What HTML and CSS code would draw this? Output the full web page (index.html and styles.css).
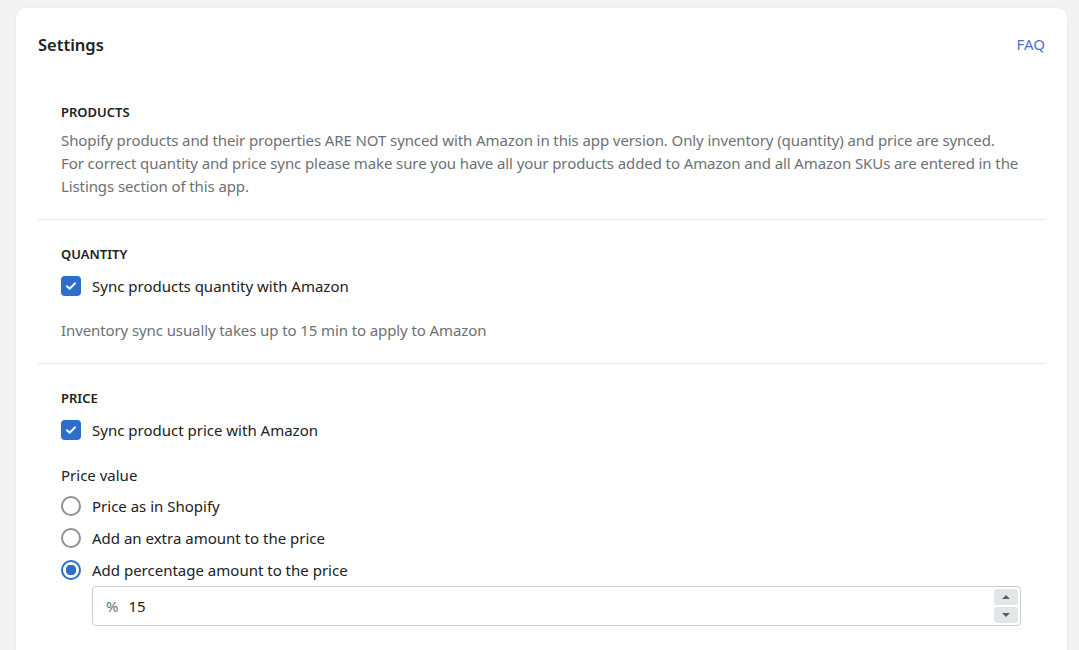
FILE: index.html
```html
<!DOCTYPE html>
<html lang="en">
<head>
  <meta charset="UTF-8">
  <title>Settings</title>
  <link rel="stylesheet" href="styles.css">
</head>
<body>
  <main class="card">
    <header class="card-head">
      <h1>Settings</h1>
      <a href="#" class="faq">FAQ</a>
    </header>

    <section class="block">
      <h2>Products</h2>
      <p class="muted">Shopify products and their properties ARE NOT synced with Amazon in this app version. Only inventory (quantity) and price are synced.<br>For correct quantity and price sync please make sure you have all your products added to Amazon and all Amazon SKUs are entered in the Listings section of this app.</p>
    </section>

    <section class="block">
      <h2>Quantity</h2>
      <label class="check">
        <span class="box"><svg viewBox="0 0 20 20" width="20" height="20"><path d="M6 10.3l2.6 2.5L14 7.4" fill="none" stroke="#fff" stroke-width="2" stroke-linecap="round" stroke-linejoin="round"/></svg></span>
        Sync products quantity with Amazon
      </label>
      <p class="muted note">Inventory sync usually takes up to 15 min to apply to Amazon</p>
    </section>

    <section class="block last">
      <h2>Price</h2>
      <label class="check">
        <span class="box"><svg viewBox="0 0 20 20" width="20" height="20"><path d="M6 10.3l2.6 2.5L14 7.4" fill="none" stroke="#fff" stroke-width="2" stroke-linecap="round" stroke-linejoin="round"/></svg></span>
        Sync product price with Amazon
      </label>

      <p class="field-label">Price value</p>
      <div class="radios">
        <label class="radio"><span class="dot"></span>Price as in Shopify</label>
        <label class="radio"><span class="dot"></span>Add an extra amount to the price</label>
        <label class="radio on"><span class="dot"></span>Add percentage amount to the price</label>
      </div>

      <div class="number">
        <span class="prefix">%</span>
        <span class="value">15</span>
        <span class="spin">
          <span class="step"><svg viewBox="0 0 10 6" width="10" height="6"><path d="M1 5h8L5 1z" fill="#5c5f62"/></svg></span>
          <span class="step"><svg viewBox="0 0 10 6" width="10" height="6"><path d="M1 1h8L5 5z" fill="#5c5f62"/></svg></span>
        </span>
      </div>
    </section>
  </main>
</body>
</html>
```

FILE: styles.css
```css
body {
  margin: 0;
  background: #f3f3f3;
  font-family: "Noto Sans", "Open Sans", sans-serif;
  font-size: 15px;
  color: #202223;
}

.card {
  width: 1007px;
  margin: 8px 0 0 16px;
  padding: 24px 22px 40px;
  background: #fff;
  border-radius: 10px;
  box-shadow: 0 0 2px rgba(0, 0, 0, 0.08);
}

.card-head {
  display: flex;
  justify-content: space-between;
  align-items: center;
  height: 24px;
  margin-bottom: 22px;
}

h1 {
  margin: 0;
  font-size: 16.5px;
  font-weight: 600;
}

.faq {
  color: #4a72d0;
  text-decoration: none;
  font-size: 15px;
}

.block {
  padding: 25px 23px 21px;
  border-bottom: 1px solid #e8e8e8;
}

.block.last {
  border-bottom: none;
  padding-bottom: 0;
}

h2 {
  margin: 0 0 8px;
  font-size: 13px;
  line-height: 18px;
  font-weight: 600;
  text-transform: uppercase;
}

.muted {
  margin: 0;
  color: #6d7175;
  line-height: 23px;
  letter-spacing: -0.1px;
}

.note {
  margin-top: 22px;
}

.check {
  display: flex;
  align-items: center;
  gap: 11px;
  height: 22px;
  margin-top: 12px;
}

.box {
  width: 20px;
  height: 20px;
  border-radius: 4px;
  background: #2c6ecb;
  display: flex;
}

.field-label {
  margin: 23px 0 0;
  line-height: 22px;
}

.radios {
  display: flex;
  flex-direction: column;
  gap: 10px;
  margin-top: 9px;
}

.radio {
  display: flex;
  align-items: center;
  gap: 11px;
  height: 22px;
}

.dot {
  box-sizing: border-box;
  width: 20px;
  height: 20px;
  border: 2px solid #8c9196;
  border-radius: 50%;
}

.radio.on .dot {
  border-color: #2c6ecb;
  background: radial-gradient(circle, #2c6ecb 0 5px, #fff 5.5px);
}

.number {
  display: flex;
  align-items: center;
  height: 40px;
  box-sizing: border-box;
  margin: 5px 0 0 31px;
  width: 929px;
  padding: 0 2px 0 13px;
  border: 1px solid #c9cccf;
  border-radius: 4px;
}

.prefix {
  color: #6d7175;
  margin-right: 10px;
}

.value {
  flex: 1;
}

.spin {
  display: flex;
  flex-direction: column;
  gap: 2px;
}

.step {
  width: 24px;
  height: 16px;
  background: #e4e5e7;
  border-radius: 3px;
  display: flex;
  align-items: center;
  justify-content: center;
}
```
